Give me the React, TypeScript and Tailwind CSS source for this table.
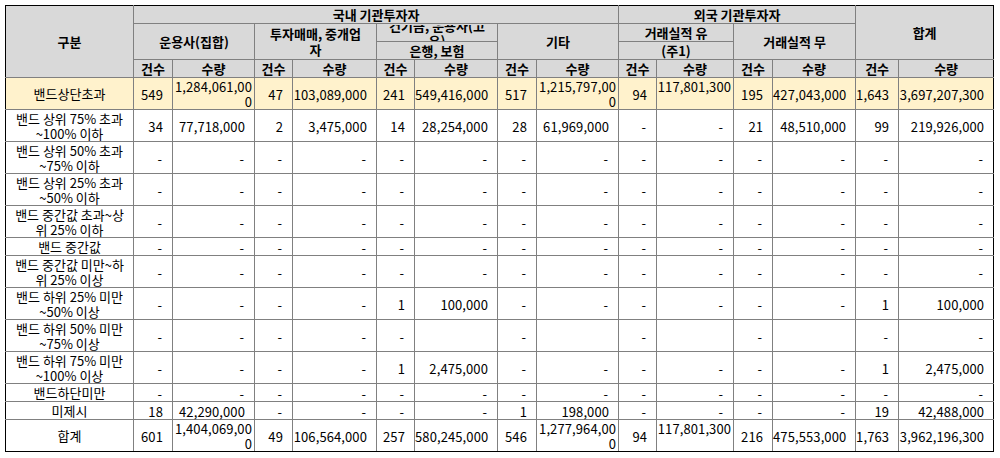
import React from "react"

const COLS = [128, 39, 82, 38, 84, 38, 83, 39, 82, 38, 77, 39, 83, 43, 95]

type Row = { label: string[]; tall?: boolean; hi?: boolean; cells: string[] }

const D = "-"
const ALL_DASH = Array(14).fill(D)

// "a|b" = wrapped number, "^x" = top aligned
const ROWS: Row[] = [
  {
    label: ["밴드상단초과"],
    tall: true,
    hi: true,
    cells: ["549", "1,284,061,00|0", "47", "103,089,000", "241", "549,416,000", "517", "1,215,797,00|0", "94", "^117,801,300", "195", "427,043,000", "1,643", "3,697,207,300"],
  },
  {
    label: ["밴드 상위 75% 초과", "~100% 이하"],
    tall: true,
    cells: ["34", "77,718,000", "2", "3,475,000", "14", "28,254,000", "28", "61,969,000", D, D, "21", "48,510,000", "99", "219,926,000"],
  },
  { label: ["밴드 상위 50% 초과", "~75% 이하"], tall: true, cells: ALL_DASH },
  { label: ["밴드 상위 25% 초과", "~50% 이하"], tall: true, cells: ALL_DASH },
  { label: ["밴드 중간값 초과~상", "위 25% 이하"], tall: true, cells: ALL_DASH },
  { label: ["밴드 중간값"], cells: ALL_DASH },
  { label: ["밴드 중간값 미만~하", "위 25% 이상"], tall: true, cells: ALL_DASH },
  {
    label: ["밴드 하위 25% 미만", "~50% 이상"],
    tall: true,
    cells: [D, D, D, D, "1", "100,000", D, D, D, D, D, D, "1", "100,000"],
  },
  {
    label: ["밴드 하위 50% 미만", "~75% 이상"],
    tall: true,
    cells: [D, D, D, D, D, "", D, "", D, "", D, "", D, D],
  },
  {
    label: ["밴드 하위 75% 미만", "~100% 이상"],
    tall: true,
    cells: [D, D, D, D, "1", "2,475,000", D, D, D, D, D, D, "1", "2,475,000"],
  },
  { label: ["밴드하단미만"], cells: ALL_DASH },
  {
    label: ["미제시"],
    cells: ["18", "42,290,000", D, D, D, D, "1", "198,000", D, D, D, D, "19", "42,488,000"],
  },
  {
    label: ["합계"],
    tall: true,
    cells: ["601", "1,404,069,00|0", "49", "106,564,000", "257", "580,245,000", "546", "1,277,964,00|0", "94", "^117,801,300", "216", "475,553,000", "1,763", "3,962,196,300"],
  },
]

const cell = "border border-[#808080] p-0"
const head = `${cell} bg-[#d9d9d9] font-bold text-center align-middle`
const num = "text-right text-[13px] leading-[15px] tracking-[0.1px]"

function Num({ v }: { v: string }) {
  if (v.includes("|")) {
    const [a, b] = v.split("|")
    return (
      <div className={`${num} pr-[2px]`}>
        <div>{a}</div>
        <div>{b}</div>
      </div>
    )
  }
  if (v.startsWith("^")) {
    return <div className={`${num} h-[29px] pr-[2px] pt-[1px]`}>{v.slice(1)}</div>
  }
  return <div className={`${num} pt-[1px] ${v === D ? "pr-[10px]" : "pr-[9px]"}`}>{v}</div>
}

export default function App() {
  return (
    <div className="bg-white p-[5px] font-['Noto_Sans_CJK_KR',sans-serif] text-[13px] leading-[15px] text-black">
      <table className="w-[988px] table-fixed border-collapse">
        <colgroup>
          {COLS.map((w, i) => (
            <col key={i} style={{ width: w }} />
          ))}
        </colgroup>
        <thead>
          <tr className="h-[18px]">
            <th rowSpan={4} className={`${head} border-t-black border-l-black`}>
              구분
            </th>
            <th colSpan={8} className={`${head} border-t-black`}>
              국내 기관투자자
            </th>
            <th colSpan={4} className={`${head} border-t-black`}>
              외국 기관투자자
            </th>
            <th colSpan={2} rowSpan={3} className={`${head} border-t-black border-r-black`}>
              합계
            </th>
          </tr>
          <tr className="h-[18px]">
            <th colSpan={2} rowSpan={2} className={head}>
              운용사(집합)
            </th>
            <th colSpan={2} rowSpan={2} className={`${head} leading-[16px]`}>
              투자매매, 중개업
              <br />자
            </th>
            <th colSpan={2} className={head}>
              <div className="flex h-[16px] flex-col items-center justify-center overflow-hidden leading-[15px]">
                <div className="shrink-0">건기금, 운용사(고</div>
                <div className="shrink-0">유)</div>
              </div>
            </th>
            <th colSpan={2} rowSpan={2} className={head}>
              기타
            </th>
            <th colSpan={2} className={head}>
              거래실적 유
            </th>
            <th colSpan={2} rowSpan={2} className={head}>
              거래실적 무
            </th>
          </tr>
          <tr className="h-[18px]">
            <th colSpan={2} className={head}>
              은행, 보험
            </th>
            <th colSpan={2} className={head}>
              (주1)
            </th>
          </tr>
          <tr className="h-[18px]">
            {Array.from({ length: 7 }).flatMap((_, i) => [
              <th key={`c${i}`} className={head}>
                건수
              </th>,
              <th key={`q${i}`} className={`${head} ${i === 6 ? "border-r-black" : ""}`}>
                수량
              </th>,
            ])}
          </tr>
        </thead>
        <tbody>
          {ROWS.map((r, ri) => {
            const last = ri === ROWS.length - 1
            const bg = r.hi ? "bg-[#fff2cc]" : "bg-white"
            const bb = last ? "border-b-black" : ""
            return (
              <tr key={ri} className={r.tall ? "h-[32px]" : "h-[18px]"}>
                <td className={`${cell} ${bg} ${bb} border-l-black align-middle`}>
                  <div className="flex flex-col items-center whitespace-nowrap">
                    {r.label.map((l, i) => (
                      <span key={i}>{l}</span>
                    ))}
                  </div>
                </td>
                {r.cells.map((v, ci) => (
                  <td
                    key={ci}
                    className={`${cell} ${bg} ${bb} ${ci === 13 ? "border-r-black" : ""} ${
                      v.startsWith("^") ? "align-top" : "align-middle"
                    }`}
                  >
                    {v && <Num v={v} />}
                  </td>
                ))}
              </tr>
            )
          })}
        </tbody>
      </table>
    </div>
  )
}
